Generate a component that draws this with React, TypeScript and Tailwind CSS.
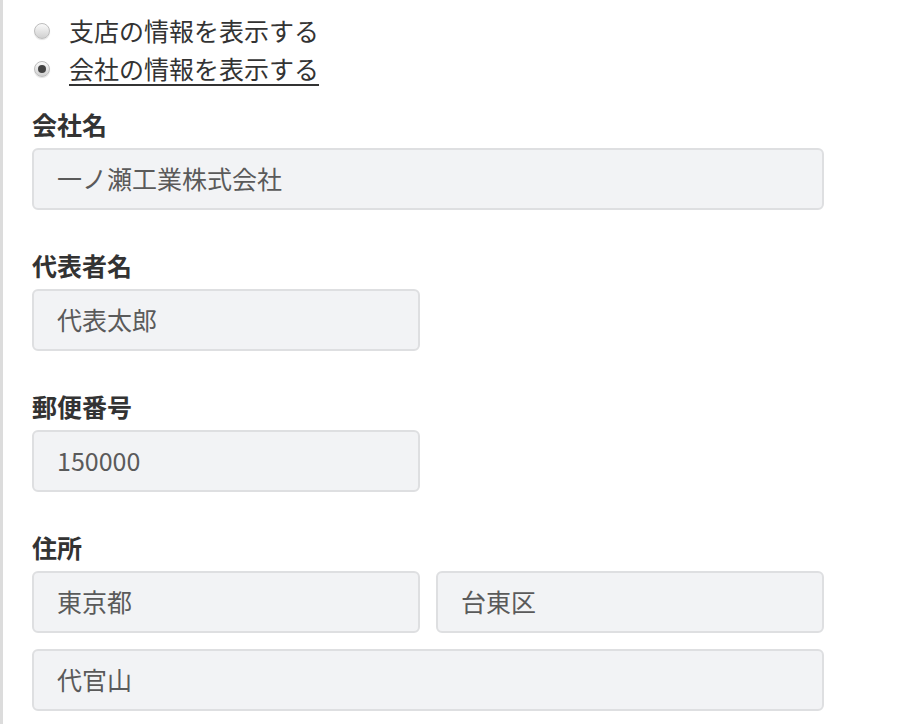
import React from "react";

const font = { fontFamily: '"Noto Sans CJK JP", "Noto Sans", sans-serif' };

function Field({ value, className = "" }: { value: string; className?: string }) {
  return (
    <div
      className={`h-[62px] rounded-[6px] border-2 border-[#dedfe1] bg-[#f2f3f5] pl-[23px] flex items-center text-[25px] text-[#5a5a5a] ${className}`}
    >
      {value}
    </div>
  );
}

function Label({ text }: { text: string }) {
  return <div className="h-[32px] leading-[32px] mb-[8px] text-[25px] font-bold text-[#333333]">{text}</div>;
}

function Radio({ checked, text }: { checked: boolean; text: string }) {
  return (
    <div className="h-[38px] flex items-center">
      <span className="ml-[2px] w-[16px] h-[16px] rounded-full border border-[#bdbdbd] bg-gradient-to-b from-[#fafafa] to-[#d0d0d0] flex items-center justify-center shadow-[0_1px_1px_rgba(0,0,0,0.12)]">
        {checked && <span className="w-[8px] h-[8px] rounded-full bg-[#444]" />}
      </span>
      <span className={`ml-[19px] text-[25px] text-[#333333] ${checked ? "underline underline-offset-[5px] decoration-[2px]" : ""}`}>
        {text}
      </span>
    </div>
  );
}

export default function App() {
  return (
    <div className="w-[914px] h-[724px] bg-white flex overflow-hidden" style={font}>
      <div className="w-[3px] bg-[#dcdcdc] shrink-0" />
      <div className="pl-[29px] pt-[12px] w-[824px]">
        <Radio checked={false} text="支店の情報を表示する" />
        <Radio checked={true} text="会社の情報を表示する" />
        <div className="mt-[20px]">
          <Label text="会社名" />
          <Field value="一ノ瀬工業株式会社" className="w-[792px]" />
        </div>
        <div className="mt-[39px]">
          <Label text="代表者名" />
          <Field value="代表太郎" className="w-[388px]" />
        </div>
        <div className="mt-[39px]">
          <Label text="郵便番号" />
          <Field value="150000" className="w-[388px]" />
        </div>
        <div className="mt-[39px]">
          <Label text="住所" />
          <div className="flex gap-[16px] w-[792px]">
            <Field value="東京都" className="w-[388px]" />
            <Field value="台東区" className="w-[388px]" />
          </div>
          <Field value="代官山" className="w-[792px] mt-[16px]" />
        </div>
      </div>
    </div>
  );
}
